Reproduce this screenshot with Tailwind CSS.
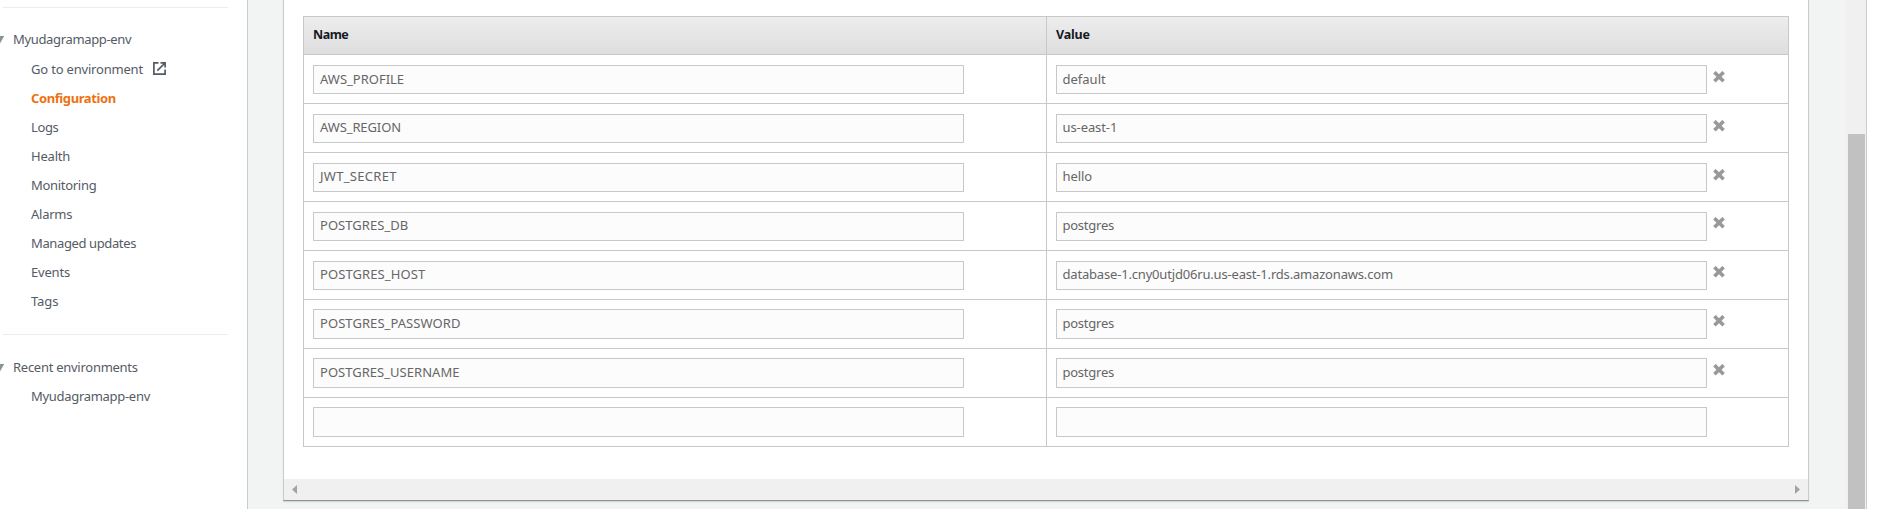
<!DOCTYPE html>
<html lang="en">
<head>
<meta charset="utf-8">
<title>Environment properties</title>
<script src="https://cdn.jsdelivr.net/npm/@tailwindcss/browser@4"></script>
</head>
<body class="flex h-[509px] overflow-hidden bg-white font-['Noto_Sans',sans-serif] text-[13px] text-[#545b64]">
<nav class="flex h-full w-[248px] shrink-0 flex-col border-r border-[#c8cccc] whitespace-nowrap">
  <div class="mt-[7px] ml-[3px] h-px w-[225px] shrink-0 bg-[#eaeded]"></div>
  <div class="mt-[17px] flex h-[29px] items-center">
    <svg class="mr-[9px] h-2 w-1 shrink-0" viewBox="0 0 4 8"><path d="M0 0H4.2L0 7.5Z" fill="#879596"/></svg>
    <span class="leading-[29px] tracking-[-0.34px]">Myudagramapp-env</span>
  </div>
  <ul class="mt-px pl-[31px] leading-[29px]">
    <li class="flex h-[29px]"><span class="tracking-[-0.19px]">Go to environment</span>
      <svg class="mt-[7px] ml-[10px] h-[13px] w-[13px]" viewBox="0 0 13 13" fill="none" stroke="#545b64" stroke-width="1.7"><path d="M5.5 .9H.9V12.1H12.1V7.5M7.5 .9H12.1V5.5M12 1L4.3 8.7"/></svg></li>
    <li class="h-[29px] font-bold tracking-[-0.4px] text-[#ec7211]">Configuration</li>
    <li class="h-[29px] tracking-[-0.4px]">Logs</li>
    <li class="h-[29px] tracking-[-0.2px]">Health</li>
    <li class="h-[29px] tracking-[-0.3px]">Monitoring</li>
    <li class="h-[29px] tracking-[-0.25px]">Alarms</li>
    <li class="h-[29px] tracking-[-0.38px]">Managed updates</li>
    <li class="h-[29px] tracking-[-0.2px]">Events</li>
    <li class="h-[29px] tracking-[-0.1px]">Tags</li>
  </ul>
  <div class="mt-[18px] ml-[3px] h-px w-[225px] shrink-0 bg-[#eaeded]"></div>
  <div class="mt-[18px] flex h-[29px] items-center">
    <svg class="mr-[9px] h-2 w-1 shrink-0" viewBox="0 0 4 8"><path d="M0 0H4.2L0 7.5Z" fill="#879596"/></svg>
    <span class="leading-[29px] tracking-[-0.27px]">Recent environments</span>
  </div>
  <div class="pl-[31px] leading-[29px] tracking-[-0.3px]">Myudagramapp-env</div>
</nav>
<main class="flex h-full w-[1619px] shrink-0 border-r border-[#c8cccc] bg-[#f2f3f3] pl-[35px]">
  <section class="flex h-[501px] w-[1526px] shrink-0 flex-col border-x border-b border-x-[#c8cccc] border-b-[#879596] bg-white shadow-[0_1px_1px_rgba(0,28,36,0.12)]">
    <div class="mt-4 ml-[19px] w-[1486px] border border-[#c8c8c8]">
      <div class="flex h-[38px] border-b border-[#c8c8c8] bg-linear-to-b from-[#ededed] to-[#dedede] text-[12.5px] leading-[18px] font-bold tracking-[-0.5px] text-[#16191f]">
        <div class="w-[743px] border-r border-[#c8c8c8] pt-[9px] pl-[9px]">Name</div>
        <div class="pt-[9px] pl-[9px] tracking-[-0.2px]">Value</div>
      </div>
      <div id="rows" class="leading-[18px] text-[#666]"></div>
    </div>
    <div class="mt-8 flex h-[21px] items-center justify-between bg-[#f0f0f0] pr-2 pl-2">
      <svg class="h-[9px] w-[5px]" viewBox="0 0 5 9"><path d="M5 0V9L0 4.5Z" fill="#a3a3a3"/></svg>
      <svg class="h-[9px] w-[5px]" viewBox="0 0 5 9"><path d="M0 0V9L5 4.5Z" fill="#a3a3a3"/></svg>
    </div>
  </section>
  <div class="ml-auto h-full w-5 bg-[#f0f0f0] pt-[134px] pl-[2px]"><div class="h-full w-[17px] bg-[#c1c1c1]"></div></div>
</main>
<script>
// name, value, name tracking, value tracking, cell padding, text padding, icon padding
const rows = [
  ['AWS_PROFILE', 'default', 0, 0, 'pt-[10px]', 'pt-1', 'pt-[16px]'],
  ['AWS_REGION', 'us-east-1', -0.1, -0.1, 'pt-[10px]', 'pt-[3px]', 'pt-[16px]'],
  ['JWT_SECRET', 'hello', 0.3, -0.1, 'pt-[10px]', 'pt-[3px]', 'pt-[16px]'],
  ['POSTGRES_DB', 'postgres', 0.05, -0.25, 'pt-[10px]', 'pt-[3px]', 'pt-[15px]'],
  ['POSTGRES_HOST', 'database-1.cny0utjd06ru.us-east-1.rds.amazonaws.com', 0.1, -0.18, 'pt-[10px]', 'pt-[3px]', 'pt-[15px]'],
  ['POSTGRES_PASSWORD', 'postgres', 0.07, -0.25, 'pt-[9px]', 'pt-1', 'pt-[15px]'],
  ['POSTGRES_USERNAME', 'postgres', 0.03, -0.25, 'pt-[9px]', 'pt-1', 'pt-[15px]'],
  ['', '', 0, 0, 'pt-[9px]', 'pt-1', '']
];
const cross = '<svg class="h-3 w-3" viewBox="0 0 12 12" fill="none" stroke="#999" stroke-width="3.6"><path d="M1.4 1.2L10.6 10.3M10.6 1.2L1.4 10.3"/></svg>';
document.getElementById('rows').innerHTML = rows.map(([n, v, a, b, cell, text, icon], i) => {
  const box = (s, t, pad) => `<div class="w-[651px] ${i > 4 ? 'h-[30px]' : 'h-[29px]'} ${text} ${pad} border border-[#c8c8c8] bg-[#fcfcfc]" style="letter-spacing:${t}px">${s}</div>`;
  return `<div class="flex ${i < 7 ? 'h-[49px] border-b border-[#c8c8c8]' : 'h-[48px]'}">
    <div class="w-[743px] border-r border-[#c8c8c8] pl-[9px] ${cell}">${box(n, a, 'pl-[6px]')}</div>
    <div class="pl-[9px] ${cell}">${box(v, b, 'pl-[5.5px]')}</div>
    ${icon ? `<div class="pl-[6px] ${icon}">${cross}</div>` : ''}
  </div>`;
}).join('');
</script>
</body>
</html>
